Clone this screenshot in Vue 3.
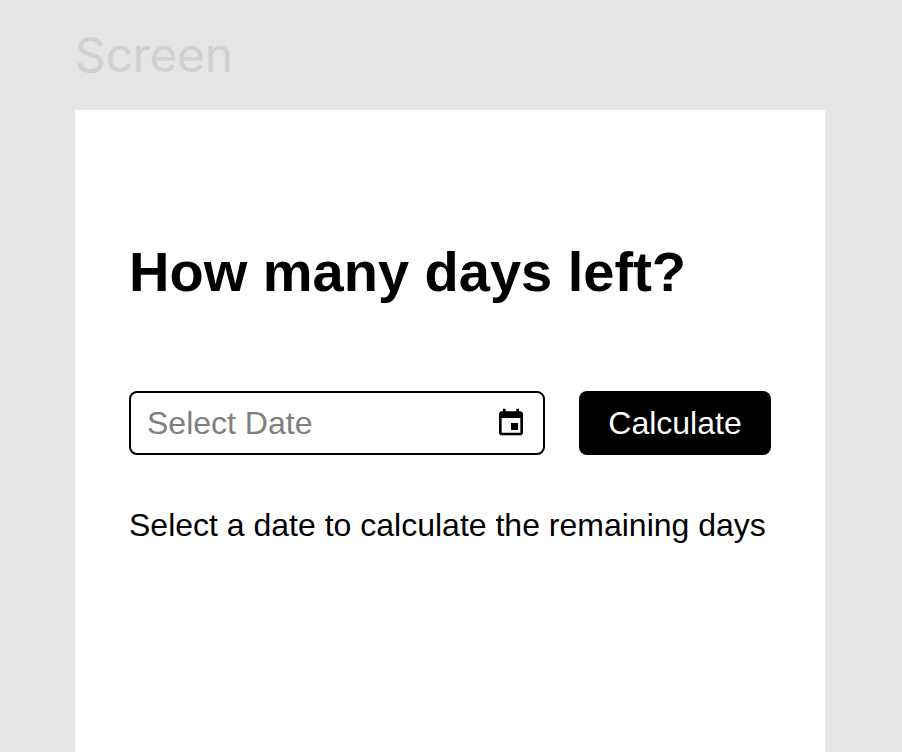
<template>
  <div class="page">
    <div class="screen-label">Screen</div>
    <main class="card">
      <h1>How many days left?</h1>
      <div class="form-row">
        <div class="date-field">
          <span class="placeholder">Select Date</span>
          <svg class="cal-icon" width="32" height="32" viewBox="0 0 24 24" aria-hidden="true">
            <path d="M19 4h-1V2h-2v2H8V2H6v2H5c-1.1 0-2 .9-2 2v14c0 1.1.9 2 2 2h14c1.1 0 2-.9 2-2V6c0-1.1-.9-2-2-2zm0 16H5V9h14v11zM12 12.75h5.25V18H12z" />
          </svg>
        </div>
        <button class="btn-calc">Calculate</button>
      </div>
      <p class="hint">Select a date to calculate the remaining days</p>
    </main>
  </div>
</template>

<script setup>
</script>

<style>
html, body {
  margin: 0;
  background: #e5e5e5;
}
</style>

<style scoped>
.page {
  height: 752px;
  overflow: hidden;
  background: #e5e5e5;
  padding-left: 75px;
  font-family: "Liberation Sans", Arial, sans-serif;
  color: #000;
}
.screen-label {
  height: 110px;
  line-height: 110px;
  font-family: Inter, sans-serif;
  font-size: 48px;
  letter-spacing: -0.35px;
  color: #d0d0d0;
}
.card {
  width: 750px;
  height: 642px;
  box-sizing: border-box;
  background: #fff;
  padding: 130px 54px 0 54px;
}
h1 {
  margin: 0;
  font-size: 56px;
  line-height: 64px;
  font-weight: 700;
}
.form-row {
  display: flex;
  gap: 34px;
  margin-top: 87px;
}
.date-field {
  width: 416px;
  height: 64px;
  box-sizing: border-box;
  border: 2px solid #000;
  border-radius: 8px;
  display: flex;
  align-items: center;
  justify-content: space-between;
  padding: 0 16px;
}
.placeholder {
  font-size: 32px;
  color: #808080;
}
.cal-icon {
  margin-top: -2px;
}
.btn-calc {
  width: 192px;
  height: 64px;
  border: none;
  border-radius: 8px;
  background: #000;
  color: #fff;
  font-family: inherit;
  font-size: 32px;
  cursor: pointer;
}
.hint {
  margin: 51px 0 0;
  font-size: 32px;
  line-height: 38px;
  white-space: nowrap;
}
</style>
